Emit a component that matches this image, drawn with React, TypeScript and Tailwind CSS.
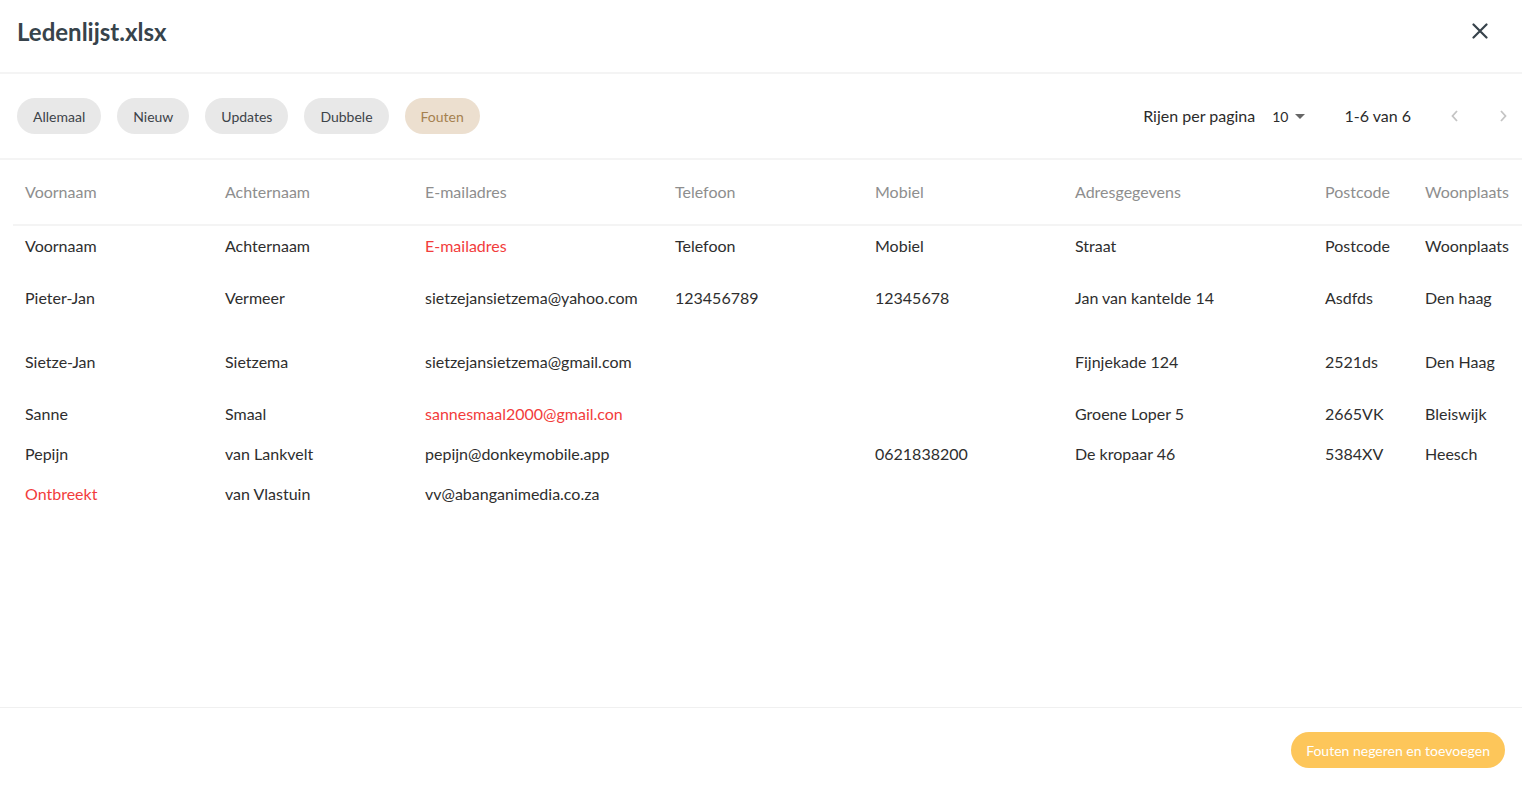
import React from 'react';

type Cell = { value: string; error?: boolean };

const columns = [
  { label: 'Voornaam', width: 'w-[200px]' },
  { label: 'Achternaam', width: 'w-[200px]' },
  { label: 'E-mailadres', width: 'w-[250px]' },
  { label: 'Telefoon', width: 'w-[200px]' },
  { label: 'Mobiel', width: 'w-[200px]' },
  { label: 'Adresgegevens', width: 'w-[250px]' },
  { label: 'Postcode', width: 'w-[100px]' },
  { label: 'Woonplaats', width: 'w-[120px]' },
];

const rows: { height: string; cells: Cell[] }[] = [
  {
    height: 'h-[41px]',
    cells: [
      { value: 'Voornaam' },
      { value: 'Achternaam' },
      { value: 'E-mailadres', error: true },
      { value: 'Telefoon' },
      { value: 'Mobiel' },
      { value: 'Straat' },
      { value: 'Postcode' },
      { value: 'Woonplaats' },
    ],
  },
  {
    height: 'h-[64px]',
    cells: [
      { value: 'Pieter-Jan' },
      { value: 'Vermeer' },
      { value: 'sietzejansietzema@yahoo.com' },
      { value: '123456789' },
      { value: '12345678' },
      { value: 'Jan van kantelde 14' },
      { value: 'Asdfds' },
      { value: 'Den haag' },
    ],
  },
  {
    height: 'h-[64px]',
    cells: [
      { value: 'Sietze-Jan' },
      { value: 'Sietzema' },
      { value: 'sietzejansietzema@gmail.com' },
      { value: '' },
      { value: '' },
      { value: 'Fijnjekade 124' },
      { value: '2521ds' },
      { value: 'Den Haag' },
    ],
  },
  {
    height: 'h-[40px]',
    cells: [
      { value: 'Sanne' },
      { value: 'Smaal' },
      { value: 'sannesmaal2000@gmail.con', error: true },
      { value: '' },
      { value: '' },
      { value: 'Groene Loper 5' },
      { value: '2665VK' },
      { value: 'Bleiswijk' },
    ],
  },
  {
    height: 'h-[40px]',
    cells: [
      { value: 'Pepijn' },
      { value: 'van Lankvelt' },
      { value: 'pepijn@donkeymobile.app' },
      { value: '' },
      { value: '0621838200' },
      { value: 'De kropaar 46' },
      { value: '5384XV' },
      { value: 'Heesch' },
    ],
  },
  {
    height: 'h-[40px]',
    cells: [
      { value: 'Ontbreekt', error: true },
      { value: 'van Vlastuin' },
      { value: 'vv@abanganimedia.co.za' },
      { value: '' },
      { value: '' },
      { value: '' },
      { value: '' },
      { value: '' },
    ],
  },
];

const filters = ['Allemaal', 'Nieuw', 'Updates', 'Dubbele', 'Fouten'];

const App: React.FC = () => {
  const active = 'Fouten';

  return (
    <div className="w-[1522px] h-[786px] bg-white flex flex-col overflow-hidden font-['Lato','Noto_Sans',sans-serif]">
      {/* Header */}
      <div className="h-[74px] shrink-0 flex items-center justify-between pl-[17px] pr-[34px] border-b-2 border-[#f4f4f4]">
        <h1 className="text-[24px] font-bold text-[#37434b] -mt-[8px]">Ledenlijst.xlsx</h1>
        <button className="text-[#37434b] -mt-[10px]">
          <svg width="16" height="16" viewBox="0 0 16 16" fill="none" stroke="currentColor" strokeWidth="2.2" strokeLinecap="round">
            <path d="M1.5 1.5L14.5 14.5M14.5 1.5L1.5 14.5" />
          </svg>
        </button>
      </div>

      {/* Filters and pagination */}
      <div className="h-[86px] shrink-0 flex items-center justify-between pl-[17px] pr-[14px] border-b-2 border-[#f4f4f4]">
        <div className="flex items-center gap-4">
          {filters.map((f) => (
            <button
              key={f}
              className={
                f === active
                  ? 'h-[36px] px-4 rounded-full bg-[#ecdfcf] text-[#a5814f] text-[14px]'
                  : 'h-[36px] px-4 rounded-full bg-[#e8e8e8] text-[#3d4348] text-[14px]'
              }
            >
              {f}
            </button>
          ))}
        </div>
        <div className="flex items-center text-[16px] text-[#2b2b2b]">
          <span>Rijen per pagina</span>
          <div className="flex items-center ml-[17px] text-[14px]">
            <span>10</span>
            <svg className="ml-[7px] text-[#666]" width="10" height="5" viewBox="0 0 10 5" fill="currentColor">
              <path d="M0 0H10L5 5Z" />
            </svg>
          </div>
          <span className="ml-[39px]">1-6 van 6</span>
          <svg className="ml-[39px] text-[#c4c4c4]" width="10" height="14" viewBox="0 0 10 14" fill="none" stroke="currentColor" strokeWidth="1.8">
            <path d="M7 2L2.5 7L7 12" />
          </svg>
          <svg className="ml-[38px] text-[#c4c4c4]" width="10" height="14" viewBox="0 0 10 14" fill="none" stroke="currentColor" strokeWidth="1.8">
            <path d="M3 2L7.5 7L3 12" />
          </svg>
        </div>
      </div>

      {/* Table */}
      <div className="flex-1 overflow-hidden pl-[13px] border-b border-[#f0f0f0]">
        <table className="table-fixed border-collapse w-[1520px] text-[16px]">
          <thead>
            <tr className="h-[65px] border-b-2 border-[#f4f4f4]">
              {columns.map((c) => (
                <th key={c.label} className={`${c.width} pl-[12px] text-left font-normal text-[#8e8e8e]`}>
                  {c.label}
                </th>
              ))}
            </tr>
          </thead>
          <tbody>
            {rows.map((r, i) => (
              <tr key={i} className={r.height}>
                {r.cells.map((c, j) => (
                  <td key={j} className={`pl-[12px] whitespace-nowrap ${c.error ? 'text-[#f23c3c]' : 'text-[#2e2e2e]'}`}>
                    {c.value}
                  </td>
                ))}
              </tr>
            ))}
          </tbody>
        </table>
      </div>

      {/* Footer */}
      <div className="h-[78px] shrink-0 flex items-center justify-end pr-[17px] pt-[6px]">
        <button className="h-[36px] px-[15px] rounded-full bg-[#fdc65a] text-white text-[14px]">
          Fouten negeren en toevoegen
        </button>
      </div>
    </div>
  );
};

export default App;
